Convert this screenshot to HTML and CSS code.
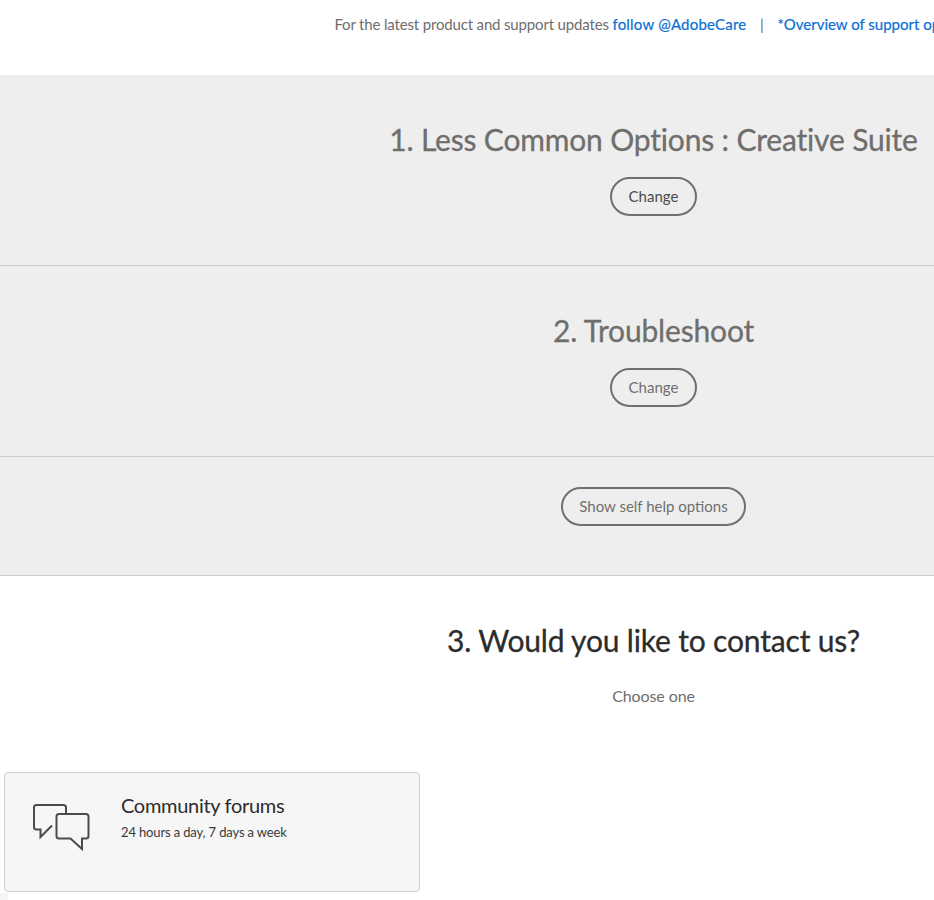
FILE: index.html
```html
<!DOCTYPE html>
<html>
<head>
  <title>Contact Customer Care</title>
  <link rel="stylesheet" href="styles.css">
</head>
<body>
  <div class="page">
    <div class="notice">
      For the latest product and support updates <a href="#">follow @AdobeCare</a>
      <span class="sep">|</span>
      <a href="#" class="overview">*Overview of support options</a>
    </div>

    <div class="step">
      <h2>1. Less Common Options : Creative Suite</h2>
      <button class="pill dark">Change</button>
    </div>
    <div class="step">
      <h2>2. Troubleshoot</h2>
      <button class="pill">Change</button>
    </div>
    <div class="step step-short">
      <button class="pill">Show self help options</button>
    </div>

    <div class="contact">
      <h2>3. Would you like to contact us?</h2>
      <p class="choose">Choose one</p>
    </div>

    <div class="cards">
      <div class="card">
        <svg class="card-icon" width="58" height="48" viewBox="0 0 58 48" fill="none" stroke="#4b4b4b" stroke-width="2">
          <path d="M34 11V4.500A2.500 2.500 0 0 0 31.500 2H4.500A2.500 2.500 0 0 0 2 4.500V24A2.500 2.500 0 0 0 4.500 26.500H8.500V34L20 22.500"/>
          <path d="M27 11H54A2.500 2.500 0 0 1 56.500 13.500V33A2.500 2.500 0 0 1 54 35.500H50V46L38.500 35.500H27A2.500 2.500 0 0 1 24.500 33V13.500A2.500 2.500 0 0 1 27 11Z"/>
        </svg>
        <div>
          <div class="card-title">Community forums</div>
          <div class="card-sub">24 hours a day, 7 days a week</div>
        </div>
      </div>
      <div class="card-stub"></div>
    </div>
  </div>
</body>
</html>
```

FILE: styles.css
```css
html, body {
  margin: 0;
  padding: 0;
  height: 900px;
  overflow: hidden;
  background: #fff;
}
body {
  font-family: 'Lato', 'Open Sans', sans-serif;
  color: #2c2c2c;
}
.page {
  width: 1307px;
}
.notice {
  height: 75px;
  box-sizing: border-box;
  padding-top: 14px;
  text-align: center;
  font-size: 15px;
  line-height: 20px;
  letter-spacing: -0.16px;
  color: #6e6e6e;
  white-space: nowrap;
}
.notice a {
  color: #0b6fd3;
  text-decoration: none;
  letter-spacing: 0.2px;
  -webkit-text-stroke: 0.2px #0b6fd3;
}
.notice a.overview {
  letter-spacing: 0;
}
.sep {
  margin: 0 10px;
}
.step {
  height: 190px;
  background: #eee;
  border-bottom: 1px solid #c9c9c9;
  text-align: center;
}
.step-short {
  height: 118px;
}
h2 {
  margin: 0;
  font-weight: 400;
  font-size: 30px;
  line-height: 40px;
  letter-spacing: -0.17px;
  padding-top: 44px;
  color: #6f6e6d;
  -webkit-text-stroke: 0.3px currentColor;
}
.pill {
  display: block;
  margin: 18px auto 0;
  height: 39px;
  padding: 0 16.5px 2px;
  background: transparent;
  border: 2px solid #707070;
  border-radius: 20px;
  font-family: inherit;
  font-size: 15px;
  color: #6f6f6f;
}
.pill.dark {
  color: #4b4b4b;
}
.step-short .pill {
  margin-top: 30px;
  display: inline-block;
}
.contact {
  text-align: center;
}
.contact h2 {
  color: #2c2c2c;
}
.choose {
  margin: 25px 0 0;
  font-size: 16px;
  line-height: 22px;
  letter-spacing: -0.1px;
  color: #6e6e6e;
}
.cards {
  padding: 65px 0 0 4px;
}
.card {
  display: flex;
  box-sizing: border-box;
  width: 416px;
  height: 120px;
  padding: 19px 27px;
  gap: 31px;
  background: #f6f6f6;
  border: 1px solid #cfcfcf;
  border-radius: 4px;
}
.card-icon {
  margin-top: 11px;
  flex: none;
}
.card-title {
  font-size: 20px;
  line-height: 26px;
  letter-spacing: -0.3px;
  color: #2c2c2c;
}
.card-sub {
  margin-top: 5px;
  font-size: 13px;
  line-height: 18px;
  letter-spacing: -0.14px;
  color: #3a3a3a;
}
.card-stub {
  width: 8px;
  height: 7px;
  margin: 1px 0 0 -4px;
  background: #f6f6f6;
}
```
